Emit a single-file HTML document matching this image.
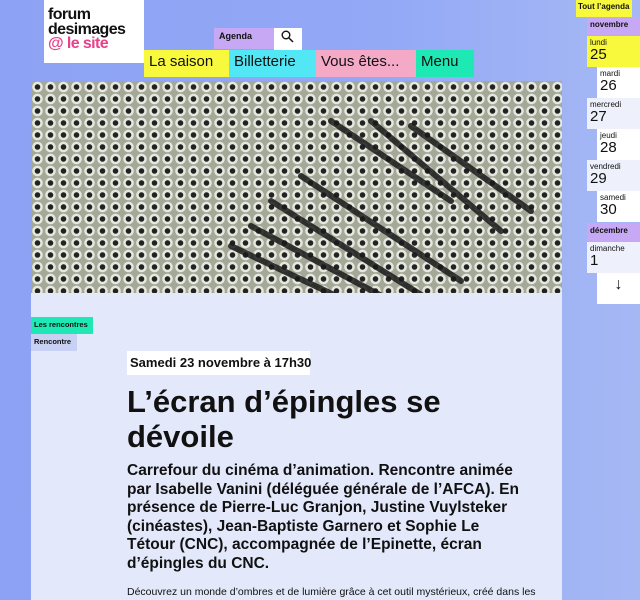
<!DOCTYPE html>
<html><head><meta charset="utf-8"><style>
*{margin:0;padding:0;box-sizing:border-box}
body{width:640px;height:600px;overflow:hidden;background:linear-gradient(90deg,#8da2f4,#93a9f6 60%,#a6b8f4);font-family:"Liberation Sans",sans-serif;position:relative;color:#111}
.abs{position:absolute;white-space:nowrap}
.logo{left:44px;top:0;width:100px;height:63px;background:#fff;font-weight:bold;font-size:16px;line-height:14.5px;padding:8px 0 0 4px;letter-spacing:-0.6px}
.nav{top:50px;height:27px;font-size:15px;padding:2px 5px;line-height:20px}
.main{left:31px;top:81px;width:531px;height:519px;background:#e3e8fb}
.img{left:31px;top:81px;width:531px;height:212px;background-color:#a4a898;background-image:radial-gradient(circle,#222 0 2.5px,#e6e8de 3px 5px,transparent 5.5px);background-size:13px 12px;overflow:hidden}
.cal div{position:absolute;font-size:8px;line-height:9px}
.cal b{font-size:15px;font-weight:normal;display:block;line-height:16px}
</style></head><body>
<div class="abs logo">forum<br>desimages<br><span style="color:#e8408a">@ le site</span></div>
<div class="abs" style="left:214px;top:28px;width:60px;height:21px;background:#c6a8f4;font-size:9px;font-weight:bold;padding:3px 5px">Agenda</div>
<div class="abs" style="left:274px;top:28px;width:28px;height:22px;background:#fff;font-size:13px;padding:2px 7px">
<svg width="13" height="13" viewBox="0 0 13 13"><circle cx="5" cy="5" r="3.8" fill="none" stroke="#111" stroke-width="1.4"/><path d="M8 8l4 4" stroke="#111" stroke-width="1.5"/></svg></div>
<div class="abs nav" style="left:144px;width:85px;background:#f8f93c">La saison</div>
<div class="abs nav" style="left:229px;width:87px;background:#52e7f4">Billetterie</div>
<div class="abs nav" style="left:316px;width:100px;background:#f4a9c6">Vous êtes...</div>
<div class="abs nav" style="left:416px;width:58px;background:#1ee9b4">Menu</div>
<div class="abs main"></div>
<div class="abs img">
<svg width="531" height="212" style="position:absolute;left:0;top:0"><g stroke="#1a1a1a" stroke-width="6" stroke-linecap="round" opacity=".85">
<path d="M300 40 L420 120"/><path d="M340 40 L470 150"/><path d="M240 120 L400 220"/><path d="M220 145 L360 220"/><path d="M200 165 L320 222"/><path d="M270 95 L430 200"/><path d="M380 45 L500 130"/></g></svg></div>
<div class="abs" style="left:31px;top:317px;width:62px;height:17px;background:#1ee9b4;font-size:7.5px;font-weight:bold;padding:3px 3px">Les rencontres</div>
<div class="abs" style="left:31px;top:334px;width:46px;height:17px;background:#c8d0f4;font-size:7.5px;font-weight:bold;padding:3px 3px">Rencontre</div>
<div class="abs" style="left:127px;top:351px;width:183px;height:24px;background:#fff;font-size:13px;font-weight:bold;padding:4px 3px">Samedi 23 novembre à 17h30</div>
<div class="abs" style="left:127px;top:384px;width:400px;font-size:31px;font-weight:bold;line-height:35px;white-space:normal">L’écran d’épingles se dévoile</div>
<div class="abs" style="left:127px;top:462px;font-size:15.5px;font-weight:bold;line-height:18.5px">Carrefour du cinéma d’animation. Rencontre animée<br>par Isabelle Vanini (déléguée générale de l’AFCA). En<br>présence de Pierre-Luc Granjon, Justine Vuylsteker<br>(cinéastes), Jean-Baptiste Garnero et Sophie Le<br>Tétour (CNC), accompagnée de l’Epinette, écran<br>d’épingles du CNC.</div>
<div class="abs" style="left:127px;top:586px;font-size:10.5px">Découvrez un monde d’ombres et de lumière grâce à cet outil mystérieux, créé dans les</div>
<div class="cal">
<div style="left:576px;top:0;width:56px;height:17px;background:#f8f93c;font-weight:bold;padding:2px 2px;white-space:nowrap">Tout l’agenda</div>
<div style="left:587px;top:17px;width:53px;height:18px;background:#c6a8f4;font-weight:bold;padding:3px 3px">novembre</div>
<div style="left:587px;top:36px;width:53px;height:31px;background:#f8f93c;padding:2px 3px">lundi<b>25</b></div>
<div style="left:597px;top:67px;width:43px;height:31px;background:#fff;padding:2px 3px">mardi<b>26</b></div>
<div style="left:587px;top:98px;width:53px;height:31px;background:#eef0fc;padding:2px 3px">mercredi<b>27</b></div>
<div style="left:597px;top:129px;width:43px;height:31px;background:#fff;padding:2px 3px">jeudi<b>28</b></div>
<div style="left:587px;top:160px;width:53px;height:31px;background:#eef0fc;padding:2px 3px">vendredi<b>29</b></div>
<div style="left:597px;top:191px;width:43px;height:31px;background:#fff;padding:2px 3px">samedi<b>30</b></div>
<div style="left:587px;top:223px;width:53px;height:18px;background:#c6a8f4;font-weight:bold;padding:3px 3px">décembre</div>
<div style="left:587px;top:242px;width:53px;height:31px;background:#eef0fc;padding:2px 3px">dimanche<b>1</b></div>
<div style="left:597px;top:273px;width:43px;height:31px;background:#fff;font-size:16px;line-height:24px;text-align:center">↓</div>
</div>
</body></html>
